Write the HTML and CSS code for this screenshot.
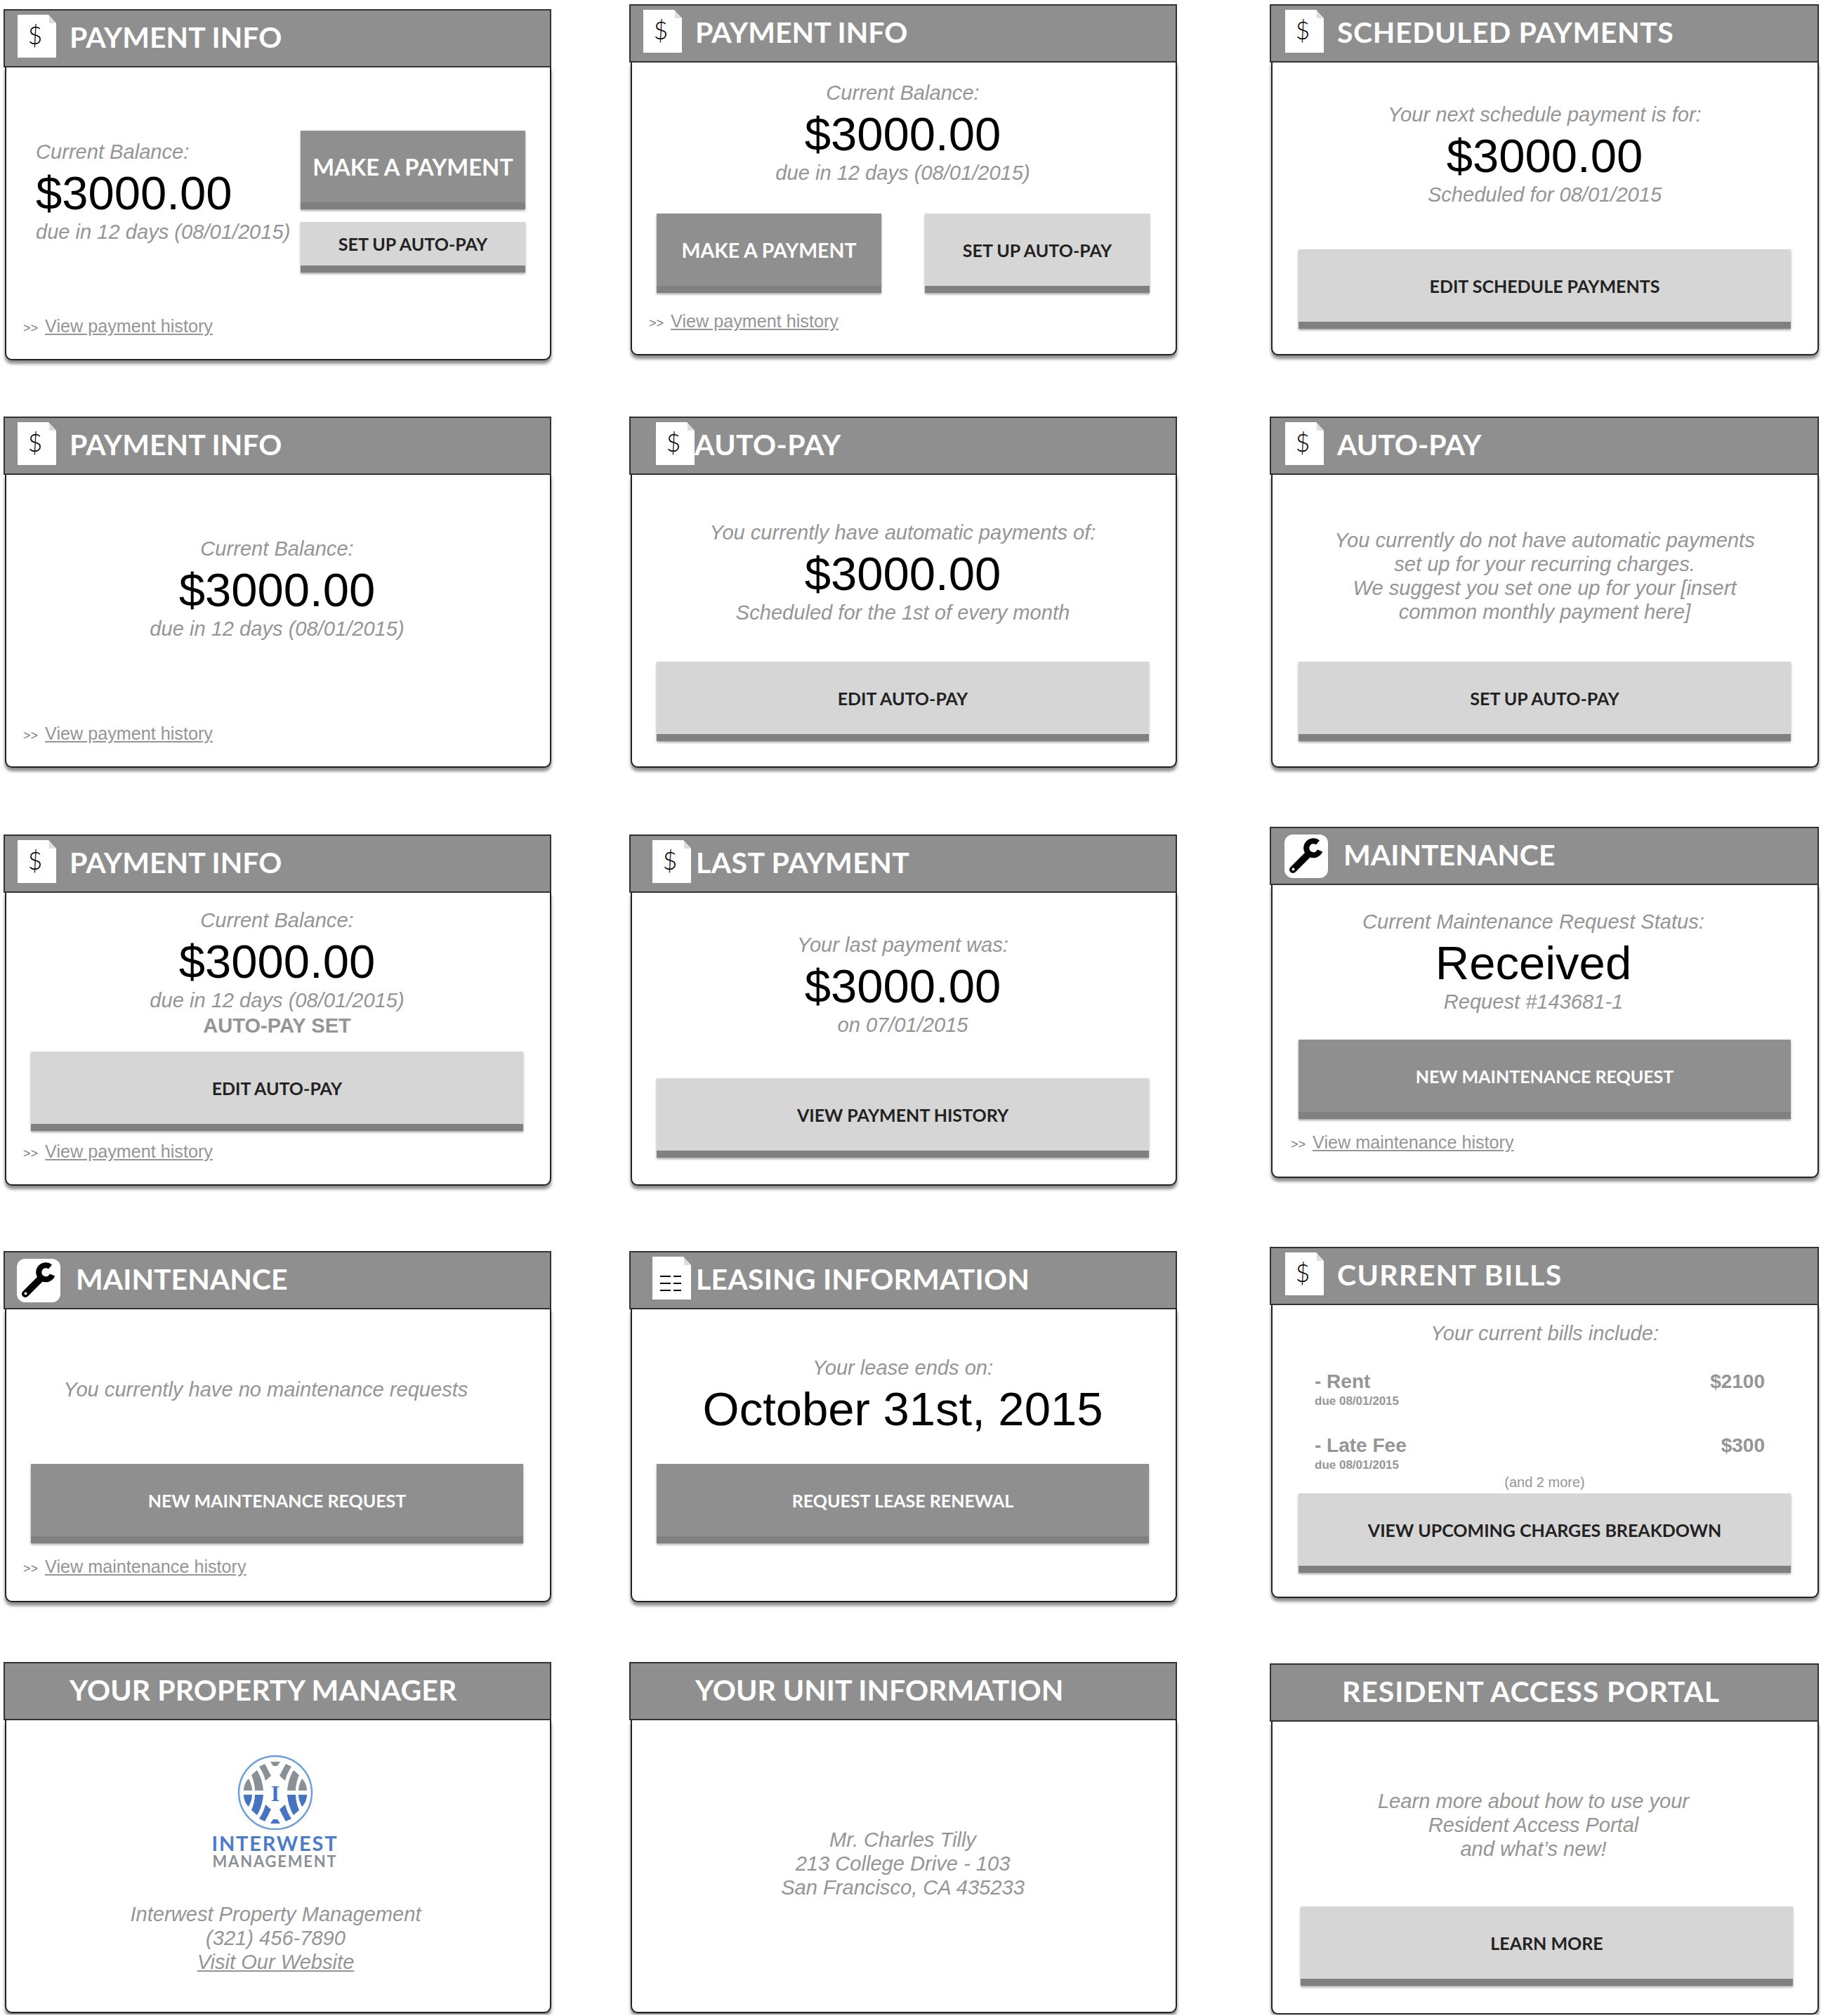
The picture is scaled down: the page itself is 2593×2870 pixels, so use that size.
FILE: index.html
```html
<!DOCTYPE html>
<html>
<head>
    <meta charset="UTF-8">
    <title>Resident Dashboard Widgets</title>
    <link rel="stylesheet" href="styles.css">
</head>
<body>
    <svg class="icon-defs" width="0" height="0">
        <defs>
            <g id="docShape">
                <path d="M0 0H44L55 12V61H0Z" fill="#fff"/>
                <path d="M45 1L54 12H45Z" fill="#dedede"/>
            </g>
            <g id="wrenchShape">
                <rect width="62" height="62" rx="12" fill="#fff"/>
                <path d="M12 50L33 29" stroke="#000" stroke-width="10" stroke-linecap="round"/>
                <path d="M47.5 11.5A10 10 0 1 0 50.5 23" fill="none" stroke="#000" stroke-width="8"/>
                <circle cx="12.5" cy="49.5" r="2" fill="#fff"/>
            </g>
            <g id="globeQuarter">
                <path d="M-45 -3C-45 -10 -42 -16 -38 -20C-35 -14 -33 -9 -33 -3Z"/>
                <path d="M-29 -3H-17C-18 -14 -21 -24 -26 -32L-34 -25C-31 -18 -29 -10 -29 -3Z"/>
                <path d="M-23 -37L-15 -41C-11 -34 -8 -28 -6 -24L-14 -17C-16 -25 -19 -31 -23 -37Z"/>
            </g>
        </defs>
    </svg>

    <div class="board">

        <!-- Left column -->
        <div class="column">
            <div class="card card-side">
                <div class="card-header">
                    <svg class="doc-icon" viewBox="0 0 55 61"><use href="#docShape"/><text x="25" y="42" class="doc-dollar">$</text></svg>
                    <span class="card-title title-gap">PAYMENT INFO</span>
                </div>
                <div class="card-body">
                    <div class="side-row">
                        <div class="side-text">
                            <div class="note">Current Balance:</div>
                            <div class="amount">$3000.00</div>
                            <div class="note">due in 12 days (08/01/2015)</div>
                        </div>
                        <div class="side-buttons">
                            <button class="btn btn-dark btn-large">MAKE A PAYMENT</button>
                            <button class="btn btn-light btn-short">SET UP AUTO-PAY</button>
                        </div>
                    </div>
                    <div class="history"><span class="history-arrows">&gt;&gt;</span><a class="history-link">View payment history</a></div>
                </div>
            </div>

            <div class="card card-balance">
                <div class="card-header">
                    <svg class="doc-icon" viewBox="0 0 55 61"><use href="#docShape"/><text x="25" y="42" class="doc-dollar">$</text></svg>
                    <span class="card-title title-gap">PAYMENT INFO</span>
                </div>
                <div class="card-body">
                    <div class="note">Current Balance:</div>
                    <div class="amount">$3000.00</div>
                    <div class="note">due in 12 days (08/01/2015)</div>
                    <div class="history"><span class="history-arrows">&gt;&gt;</span><a class="history-link">View payment history</a></div>
                </div>
            </div>

            <div class="card card-autoset">
                <div class="card-header">
                    <svg class="doc-icon" viewBox="0 0 55 61"><use href="#docShape"/><text x="25" y="42" class="doc-dollar">$</text></svg>
                    <span class="card-title title-gap">PAYMENT INFO</span>
                </div>
                <div class="card-body">
                    <div class="note">Current Balance:</div>
                    <div class="amount">$3000.00</div>
                    <div class="note">due in 12 days (08/01/2015)</div>
                    <div class="note note-strong">AUTO-PAY SET</div>
                    <button class="btn btn-light">EDIT AUTO-PAY</button>
                    <div class="history"><span class="history-arrows">&gt;&gt;</span><a class="history-link">View payment history</a></div>
                </div>
            </div>

            <div class="card card-nomaint">
                <div class="card-header">
                    <svg class="wrench-icon" viewBox="0 0 62 62"><use href="#wrenchShape"/></svg>
                    <span class="card-title title-gap-wrench">MAINTENANCE</span>
                </div>
                <div class="card-body">
                    <div class="note note-shift">You currently have no maintenance requests</div>
                    <button class="btn btn-dark">NEW MAINTENANCE REQUEST</button>
                    <div class="history"><span class="history-arrows">&gt;&gt;</span><a class="history-link">View maintenance history</a></div>
                </div>
            </div>

            <div class="card card-manager">
                <div class="card-header card-header-plain">
                    <span class="card-title">YOUR PROPERTY MANAGER</span>
                </div>
                <div class="card-body">
                    <div class="logo">
                        <svg class="logo-globe" viewBox="-54 -54 108 108">
                            <circle r="52" fill="none" stroke="#6a9fdc" stroke-width="2.5"/>
                            <g fill="#8b9096">
                                <use href="#globeQuarter"/>
                                <use href="#globeQuarter" transform="scale(-1 1)"/>
                                <path d="M-7 -44H7L3 -38H-3Z"/>
                            </g>
                            <g fill="#4673c2">
                                <use href="#globeQuarter" transform="scale(1 -1)"/>
                                <use href="#globeQuarter" transform="scale(-1 -1)"/>
                                <path d="M-7 44H7L3 38H-3Z"/>
                            </g>
                            <text x="0" y="12" class="logo-letter">I</text>
                        </svg>
                        <div class="logo-name">INTERWEST</div>
                        <div class="logo-sub">MANAGEMENT</div>
                    </div>
                    <div class="note">Interwest Property Management<br>(321) 456-7890<br><a class="note-link">Visit Our Website</a></div>
                </div>
            </div>
        </div>

        <!-- Middle column -->
        <div class="column column-mid">
            <div class="card card-twobtn">
                <div class="card-header">
                    <svg class="doc-icon" viewBox="0 0 55 61"><use href="#docShape"/><text x="25" y="42" class="doc-dollar">$</text></svg>
                    <span class="card-title title-gap">PAYMENT INFO</span>
                </div>
                <div class="card-body">
                    <div class="note">Current Balance:</div>
                    <div class="amount">$3000.00</div>
                    <div class="note">due in 12 days (08/01/2015)</div>
                    <div class="btn-row">
                        <button class="btn btn-dark btn-medium">MAKE A PAYMENT</button>
                        <button class="btn btn-light">SET UP AUTO-PAY</button>
                    </div>
                    <div class="history"><span class="history-arrows">&gt;&gt;</span><a class="history-link">View payment history</a></div>
                </div>
            </div>

            <div class="card card-autopay">
                <div class="card-header card-header-close">
                    <svg class="doc-icon" viewBox="0 0 55 61"><use href="#docShape"/><text x="25" y="42" class="doc-dollar">$</text></svg>
                    <span class="card-title">AUTO-PAY</span>
                </div>
                <div class="card-body">
                    <div class="note">You currently have automatic payments of:</div>
                    <div class="amount">$3000.00</div>
                    <div class="note">Scheduled for the 1st of every month</div>
                    <button class="btn btn-light">EDIT AUTO-PAY</button>
                </div>
            </div>

            <div class="card card-last">
                <div class="card-header card-header-last">
                    <svg class="doc-icon" viewBox="0 0 55 61"><use href="#docShape"/><text x="25" y="42" class="doc-dollar">$</text></svg>
                    <span class="card-title">LAST PAYMENT</span>
                </div>
                <div class="card-body">
                    <div class="note">Your last payment was:</div>
                    <div class="amount">$3000.00</div>
                    <div class="note">on 07/01/2015</div>
                    <button class="btn btn-light">VIEW PAYMENT HISTORY</button>
                </div>
            </div>

            <div class="card card-lease">
                <div class="card-header card-header-last">
                    <svg class="doc-icon" viewBox="0 0 55 61">
                        <use href="#docShape"/>
                        <path d="M11 28H26M30 28H41M11 38H26M30 38H41M11 48H26M30 48H41" stroke="#000" stroke-width="2"/>
                    </svg>
                    <span class="card-title">LEASING INFORMATION</span>
                </div>
                <div class="card-body">
                    <div class="note">Your lease ends on:</div>
                    <div class="amount">October 31st, 2015</div>
                    <button class="btn btn-dark">REQUEST LEASE RENEWAL</button>
                </div>
            </div>

            <div class="card card-unit">
                <div class="card-header card-header-plain">
                    <span class="card-title">YOUR UNIT INFORMATION</span>
                </div>
                <div class="card-body">
                    <div class="note">Mr. Charles Tilly<br>213 College Drive - 103<br>San Francisco, CA 435233</div>
                </div>
            </div>
        </div>

        <!-- Right column -->
        <div class="column column-right">
            <div class="card card-scheduled">
                <div class="card-header">
                    <svg class="doc-icon" viewBox="0 0 55 61"><use href="#docShape"/><text x="25" y="42" class="doc-dollar">$</text></svg>
                    <span class="card-title title-gap">SCHEDULED PAYMENTS</span>
                </div>
                <div class="card-body">
                    <div class="note">Your next schedule payment is for:</div>
                    <div class="amount">$3000.00</div>
                    <div class="note">Scheduled for 08/01/2015</div>
                    <button class="btn btn-light">EDIT SCHEDULE PAYMENTS</button>
                </div>
            </div>

            <div class="card card-noauto">
                <div class="card-header">
                    <svg class="doc-icon" viewBox="0 0 55 61"><use href="#docShape"/><text x="25" y="42" class="doc-dollar">$</text></svg>
                    <span class="card-title title-gap">AUTO-PAY</span>
                </div>
                <div class="card-body">
                    <div class="note">You currently do not have automatic payments<br>set up for your recurring charges.<br>We suggest you set one up for your [insert<br>common monthly payment here]</div>
                    <button class="btn btn-light">SET UP AUTO-PAY</button>
                </div>
            </div>

            <div class="card card-status">
                <div class="card-header">
                    <svg class="wrench-icon" viewBox="0 0 62 62"><use href="#wrenchShape"/></svg>
                    <span class="card-title title-gap-wrench">MAINTENANCE</span>
                </div>
                <div class="card-body">
                    <div class="note note-shift">Current Maintenance Request Status:</div>
                    <div class="amount note-shift">Received</div>
                    <div class="note note-shift">Request #143681-1</div>
                    <button class="btn btn-dark">NEW MAINTENANCE REQUEST</button>
                    <div class="history"><span class="history-arrows">&gt;&gt;</span><a class="history-link">View maintenance history</a></div>
                </div>
            </div>

            <div class="card card-bills">
                <div class="card-header">
                    <svg class="doc-icon" viewBox="0 0 55 61"><use href="#docShape"/><text x="25" y="42" class="doc-dollar">$</text></svg>
                    <span class="card-title title-gap">CURRENT BILLS</span>
                </div>
                <div class="card-body">
                    <div class="note">Your current bills include:</div>
                    <div class="bill">
                        <div>
                            <div class="bill-name">- Rent</div>
                            <div class="bill-due">due 08/01/2015</div>
                        </div>
                        <div class="bill-name">$2100</div>
                    </div>
                    <div class="bill">
                        <div>
                            <div class="bill-name">- Late Fee</div>
                            <div class="bill-due">due 08/01/2015</div>
                        </div>
                        <div class="bill-name">$300</div>
                    </div>
                    <div class="bill-more">(and 2 more)</div>
                    <button class="btn btn-light">VIEW UPCOMING CHARGES BREAKDOWN</button>
                </div>
            </div>

            <div class="card card-portal">
                <div class="card-header card-header-plain">
                    <span class="card-title">RESIDENT ACCESS PORTAL</span>
                </div>
                <div class="card-body">
                    <div class="note note-shift">Learn more about how to use your<br>Resident Access Portal<br>and what&rsquo;s new!</div>
                    <button class="btn btn-light">LEARN MORE</button>
                </div>
            </div>
        </div>

    </div>
</body>
</html>
```

FILE: styles.css
```css
body {
    margin: 0;
    background: #fff;
    font-family: "Liberation Sans", Arial, sans-serif;
}

.icon-defs {
    position: absolute;
}

.board {
    display: flex;
    width: 2593px;
    padding-left: 5px;
    box-sizing: border-box;
}

.column {
    display: flex;
    flex-direction: column;
    width: 780px;
}

.column-mid {
    margin-left: 111px;
}

.column-right {
    width: 782px;
    margin-left: 132px;
}

/* card shell */
.card {
    display: flex;
    flex-direction: column;
    height: 500px;
    flex: none;
}

.card-header {
    position: relative;
    display: flex;
    align-items: center;
    height: 83px;
    margin-bottom: -1px;
    box-sizing: border-box;
    padding-left: 18px;
    background-color: #8f8f8f;
    border: 2px solid #333;
}

.column-right .card-header {
    padding-left: 20px;
}

.column-right .card-header-plain,
.card-header-plain {
    padding-left: 92px;
}

.card-header-close {
    padding-left: 36px;
}

.card-header-last {
    padding-left: 31px;
}

.card-header-last .card-title {
    margin-left: 7px;
}

.card-title {
    padding-bottom: 4px;
    color: #fff;
    font-family: Lato, sans-serif;
    font-weight: 700;
    font-size: 41px;
    white-space: nowrap;
}

.title-gap {
    margin-left: 19px;
}

.title-gap-wrench {
    margin-left: 22px;
}

.doc-icon {
    width: 55px;
    height: 61px;
    flex: none;
    margin-top: -6px;
}

.doc-dollar {
    font-family: Lato, sans-serif;
    font-weight: 300;
    font-size: 36px;
    text-anchor: middle;
}

.wrench-icon {
    width: 62px;
    height: 62px;
    flex: none;
    margin-left: -1px;
}

.card-body {
    flex: 1;
    display: flex;
    flex-direction: column;
    align-items: stretch;
    margin-left: 2px;
    padding: 0 38px 0 35px;
    background: #fff;
    border: 2px solid #222;
    border-top: none;
    border-radius: 0 0 10px 10px;
    box-shadow: 0 5px 4px rgba(0, 0, 0, 0.45);
    text-align: center;
}

.column-right .card-body {
    padding-left: 37px;
}

/* text */
.note {
    color: #959595;
    font-style: italic;
    font-size: 29.1px;
    line-height: 34px;
    white-space: nowrap;
}

.note-strong {
    margin-top: 2px;
    font-style: normal;
    font-weight: bold;
}

.note-shift {
    margin-right: 16px;
    margin-left: -16px;
}

.note-link {
    color: #959595;
    text-decoration: underline;
}

.amount {
    padding-top: 4px;
    color: #000;
    font-size: 67px;
    line-height: 76px;
    white-space: nowrap;
}

/* buttons */
.btn {
    display: block;
    flex: none;
    width: 100%;
    height: 113px;
    box-sizing: border-box;
    padding: 0;
    border: none;
    border-bottom: 10px solid #808080;
    box-shadow: 0 2px 3px rgba(0, 0, 0, 0.35);
    font-family: Lato, sans-serif;
    font-weight: 700;
    font-size: 25px;
    white-space: nowrap;
}

.btn-dark {
    background-color: #8f8f8f;
    color: #fff;
}

.btn-light {
    background-color: #d6d6d6;
    color: #222;
}

.btn-large {
    height: 112px;
    font-size: 32.7px;
}

.btn-medium {
    font-size: 28.5px;
}

.btn-short {
    height: 72px;
}

.btn-row {
    display: flex;
    gap: 62px;
}

.btn-row .btn {
    width: 320px;
}

/* history link */
.history {
    margin-top: auto;
    margin-left: -11px;
    padding-bottom: 28px;
    text-align: left;
    line-height: 30px;
    white-space: nowrap;
}

.history-arrows {
    margin-right: 10px;
    color: #777;
    font-size: 18px;
}

.history-link {
    color: #959595;
    font-size: 25.2px;
    text-decoration: underline;
}

/* side by side layout of the first card */
.side-row {
    display: flex;
    justify-content: space-between;
    margin-right: -3px;
    padding-top: 91px;
}

.side-text {
    margin-top: 13px;
    margin-left: 7px;
    text-align: left;
}

.side-buttons {
    display: flex;
    flex-direction: column;
    gap: 18px;
    width: 320px;
    flex: none;
}

/* bills */
.bill {
    display: flex;
    justify-content: space-between;
    margin: 35px 37px 0 23px;
    text-align: left;
}

.bill-name {
    color: #959595;
    font-size: 28px;
    font-weight: bold;
    line-height: 34px;
}

.bill-due {
    color: #959595;
    font-size: 17px;
    font-weight: bold;
    line-height: 22px;
}

.bill-more {
    color: #959595;
    font-size: 20px;
    line-height: 26px;
}

/* logo */
.logo {
    display: flex;
    flex-direction: column;
    align-items: center;
    margin-right: 6px;
    margin-bottom: 46px;
}

.logo-globe {
    width: 108px;
    height: 108px;
}

.logo-letter {
    fill: #4673c2;
    font-family: "Liberation Serif", serif;
    font-weight: bold;
    font-size: 32px;
    text-anchor: middle;
}

.logo-name {
    margin-top: 4px;
    color: #4a7cc8;
    font-family: Lato, sans-serif;
    font-weight: 700;
    font-size: 29px;
    line-height: 28px;
    letter-spacing: 1.8px;
}

.logo-sub {
    color: #8b9096;
    font-family: Lato, sans-serif;
    font-weight: 700;
    font-size: 22px;
    line-height: 24px;
    letter-spacing: 1.8px;
}

/* per card placement */
.card-side { margin-top: 13px; }
.card-balance { margin-top: 80px; }
.card-balance .card-body { padding-top: 89px; }
.card-autoset { margin-top: 95px; }
.card-autoset .card-body { padding-top: 23px; }
.card-autoset .btn { margin-top: 20px; }
.card-nomaint { margin-top: 93px; }
.card-nomaint .card-body { padding-top: 98px; }
.card-nomaint .btn { margin-top: 89px; }
.card-nomaint .history { padding-bottom: 30px; }
.card-manager { margin-top: 85px; }
.card-manager .card-body { padding-top: 50px; }
.card-manager .note { margin-right: 4px; }
.card-manager .card-title { letter-spacing: 0.1px; }

.card-twobtn { margin-top: 6px; }
.card-twobtn .card-body { padding-top: 27px; }
.card-twobtn .btn-row { margin-top: 41px; }
.card-autopay { margin-top: 87px; }
.card-autopay .card-body { padding-top: 66px; }
.card-autopay .btn { margin-top: 53px; }
.card-autopay .card-title { letter-spacing: 0.4px; }
.card-last { margin-top: 95px; }
.card-last .card-body { padding-top: 58px; }
.card-last .btn { margin-top: 59px; }
.card-last .card-title { letter-spacing: 0.4px; }
.card-lease { margin-top: 93px; }
.card-lease .card-body { padding-top: 67px; }
.card-lease .btn { margin-top: 40px; }
.card-lease .card-title { letter-spacing: 0.2px; }
.card-unit { margin-top: 85px; }
.card-unit .card-body { padding-top: 154px; }

.card-scheduled { margin-top: 6px; }
.card-scheduled .card-body { padding-top: 58px; }
.card-scheduled .btn { margin-top: 61px; }
.card-scheduled .card-title { letter-spacing: 0.6px; }
.card-noauto { margin-top: 87px; }
.card-noauto .card-body { padding-top: 77px; }
.card-noauto .btn { margin-top: 54px; }
.card-status { margin-top: 84px; }
.card-status .card-body { padding-top: 36px; }
.card-status .btn { margin-top: 37px; }
.card-status .history { padding-bottom: 30px; }
.card-bills { margin-top: 98px; }
.card-bills .card-body { padding-top: 24px; }
.card-bills .btn { margin-top: 3px; }
.card-bills .card-title { letter-spacing: 1.35px; }
.card-portal { margin-top: 93px; }
.card-portal .card-header { padding-left: 101px; }
.card-portal .card-body { padding-top: 97px; }
.card-portal .btn { margin-top: 65px; margin-left: 3px; margin-right: -3px; }
.card-portal .card-title { letter-spacing: 0.9px; }
```
